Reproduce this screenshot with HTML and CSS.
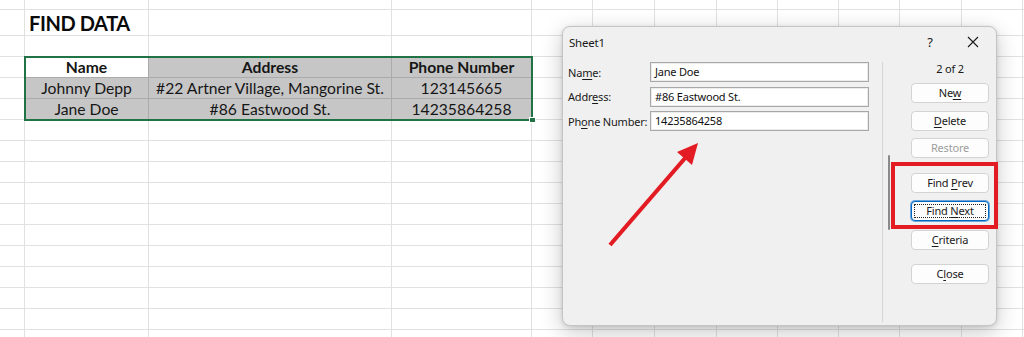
FILE: index.html
```html
<!DOCTYPE html>
<html lang="en">
<head>
<meta charset="utf-8">
<title>Find Data</title>
<link rel="stylesheet" href="styles.css">
</head>
<body>
<div class="sheet">
  <div class="title">FIND DATA</div>
  <div class="table">
    <div class="cell head active">Name</div>
    <div class="cell head">Address</div>
    <div class="cell head">Phone Number</div>
    <div class="cell">Johnny Depp</div>
    <div class="cell">#22 Artner Village, Mangorine St.</div>
    <div class="cell">123145665</div>
    <div class="cell">Jane Doe</div>
    <div class="cell">#86 Eastwood St.</div>
    <div class="cell">14235864258</div>
    <span class="handle"></span>
  </div>
</div>

<div class="dialog">
  <div class="titlebar">
    <span class="dlg-title">Sheet1</span>
    <span class="help">?</span>
    <svg class="close-x" width="12" height="12" viewBox="0 0 12 12"><path d="M1 1 L11 11 M11 1 L1 11" stroke="#1a1a1a" stroke-width="1.1" fill="none"/></svg>
  </div>
  <div class="body">
    <div class="form">
      <div class="field"><span class="label">Na<u>m</u>e:</span><span class="input">Jane Doe</span></div>
      <div class="field"><span class="label">Addr<u>e</u>ss:</span><span class="input">#86 Eastwood St.</span></div>
      <div class="field"><span class="label">Ph<u>o</u>ne Number:</span><span class="input">14235864258</span></div>
    </div>
    <div class="scroll"><span class="thumb"></span></div>
    <div class="buttons">
      <div class="count">2 of 2</div>
      <div class="btn b-new">Ne<u>w</u></div>
      <div class="btn b-delete"><u>D</u>elete</div>
      <div class="btn b-restore disabled">Restore</div>
      <div class="btn b-prev">Find <u>P</u>rev</div>
      <div class="btn b-next default"><div class="focus">Find <u>N</u>ext</div></div>
      <div class="btn b-criteria"><u>C</u>riteria</div>
      <div class="btn b-close">C<u>l</u>ose</div>
    </div>
  </div>
</div>

<div class="highlight"></div>
<svg class="arrow" width="1024" height="337" viewBox="0 0 1024 337">
  <line x1="610" y1="245" x2="686" y2="157" stroke="#e31b23" stroke-width="4.2"/>
  <polygon points="698,143 677,152 692,165" fill="#e31b23"/>
</svg>
</body>
</html>
```

FILE: styles.css
```css
* { box-sizing: border-box; }
html, body { margin: 0; padding: 0; }
body {
  width: 1024px;
  height: 337px;
  overflow: hidden;
  position: relative;
  background: #fff;
  font-family: Lato, "Liberation Sans", sans-serif;
  color: #000;
}

.sheet {
  height: 337px;
  display: grid;
  grid-template-columns: 25px 124px 243px 140px 1fr;
  grid-template-rows: 10px 26px 21px 63px 1fr;
  background-image:
    linear-gradient(to right,
      transparent 0 24px, #e1e1e1 24px 25px,
      transparent 25px 148px, #e1e1e1 148px 149px,
      transparent 149px 391px, #e1e1e1 391px 392px,
      transparent 392px 531px, #e1e1e1 531px 532px,
      transparent 532px 592px, #e1e1e1 592px 593px,
      transparent 593px 654px, #e1e1e1 654px 655px,
      transparent 655px 716px, #e1e1e1 716px 717px,
      transparent 717px 777px, #e1e1e1 777px 778px,
      transparent 778px 838px, #e1e1e1 838px 839px,
      transparent 839px 899px, #e1e1e1 899px 900px,
      transparent 900px 961px, #e1e1e1 961px 962px,
      transparent 962px 1022px, #e1e1e1 1022px 1023px,
      transparent 1023px),
    linear-gradient(to bottom, transparent 0 9px, #e1e1e1 9px 10px, transparent 10px),
    repeating-linear-gradient(to bottom, transparent 0 20px, #e1e1e1 20px 21px);
  background-size: 100% 100%, 100% 100%, 100% 322px;
  background-position: 0 0, 0 0, 0 15px;
  background-repeat: no-repeat;
}

.title {
  grid-column: 2 / 4;
  grid-row: 2;
  font-weight: 700;
  font-size: 20px;
  padding-left: 4px;
  line-height: 26px;
  letter-spacing: -0.4px;
  color: #0a0a0a;
}

.table {
  grid-column: 2 / 5;
  grid-row: 4;
  position: relative;
  display: grid;
  grid-template-columns: 124px 243px 140px;
  grid-template-rows: 21px 21px 21px;
  background: #c6c6c6;
}
.table::after {
  content: "";
  position: absolute;
  inset: -1px;
  border: 2px solid #217346;
  pointer-events: none;
}
.cell {
  display: flex;
  align-items: center;
  justify-content: center;
  font-size: 15.7px;
  border-right: 1px solid #ababab;
  border-bottom: 1px solid #ababab;
  color: #161616;
  white-space: nowrap;
}
.cell.head { font-weight: 700; }
.cell.active { background: #fff; }
.handle {
  position: absolute;
  right: -4px;
  bottom: -3px;
  width: 7px;
  height: 6px;
  background: #217346;
  border: 1px solid #fff;
  z-index: 2;
}

/* dialog */
.dialog {
  position: absolute;
  left: 562px;
  top: 26px;
  width: 435px;
  height: 300px;
  background: #f0f0f0;
  border: 1px solid #c4c4c4;
  border-radius: 8px;
  box-shadow: 0 6px 22px rgba(0, 0, 0, 0.22), 0 1px 4px rgba(0, 0, 0, 0.12);
  display: flex;
  flex-direction: column;
  font-family: "Noto Sans", "Open Sans", sans-serif;
  font-size: 11px;
  letter-spacing: -0.2px;
  color: #1a1a1a;
}
.titlebar {
  height: 29px;
  display: flex;
  align-items: center;
  padding-left: 6px;
}
.dlg-title { flex: 1; font-size: 11.5px; padding-top: 1px; }
.help { font-size: 13px; width: 14px; text-align: center; margin-right: 30px; }
.close-x { margin-right: 17px; }

.body {
  flex: 1;
  display: flex;
}
.form {
  width: 319px;
  padding: 6px 13px 0 5px;
}
.field {
  display: flex;
  align-items: center;
  height: 20px;
  margin-bottom: 4.5px;
}
.label { width: 82px; white-space: nowrap; }
.input {
  width: 219px;
  height: 20px;
  background: #fff;
  border: 1px solid #a8a8a8;
  box-shadow: inset 0 0 0 1px #ececec;
  padding-left: 4px;
  line-height: 17px;
  font-size: 11px;
  color: #111;
}

.scroll {
  width: 8px;
  border-left: 1px solid #d6d6d6;
  margin-top: 6px;
  margin-bottom: 3px;
  padding-top: 93px;
  padding-left: 5px;
}
.thumb {
  display: block;
  width: 2px;
  height: 75px;
  background: #8a8a8a;
  border-radius: 1px;
}

.buttons {
  width: 106px;
  padding-left: 21px;
}
.count {
  width: 78px;
  text-align: center;
  margin-top: 5px;
  height: 16px;
  line-height: 16px;
}
.btn {
  width: 78px;
  height: 20px;
  background: #fdfdfd;
  border: 1px solid #d3d3d3;
  border-radius: 4px;
  text-align: center;
  font-size: 11px;
  line-height: 17px;
}
.btn.disabled { color: #9d9d9d; }
.btn u { text-underline-offset: 2px; }
.label u { text-underline-offset: 2px; }
.b-new { margin-top: 6px; }
.b-delete { margin-top: 8px; }
.b-restore { margin-top: 7px; }
.b-prev { margin-top: 15px; }
.b-next { margin-top: 8px; }
.b-criteria { margin-top: 9px; }
.b-close { margin-top: 14px; }
.btn.default {
  border: 1px solid #0067c0;
  box-shadow: 0 0 0 1px #6aa6dc;
  padding: 2px;
}
.focus {
  height: 14px;
  line-height: 12px;
  border: 1px dotted #222;
  text-align: center;
}

.highlight {
  position: absolute;
  left: 891px;
  top: 162px;
  width: 107px;
  height: 67px;
  border: 4px solid #e21c22;
}
.arrow {
  position: absolute;
  left: 0;
  top: 0;
  pointer-events: none;
}
```
